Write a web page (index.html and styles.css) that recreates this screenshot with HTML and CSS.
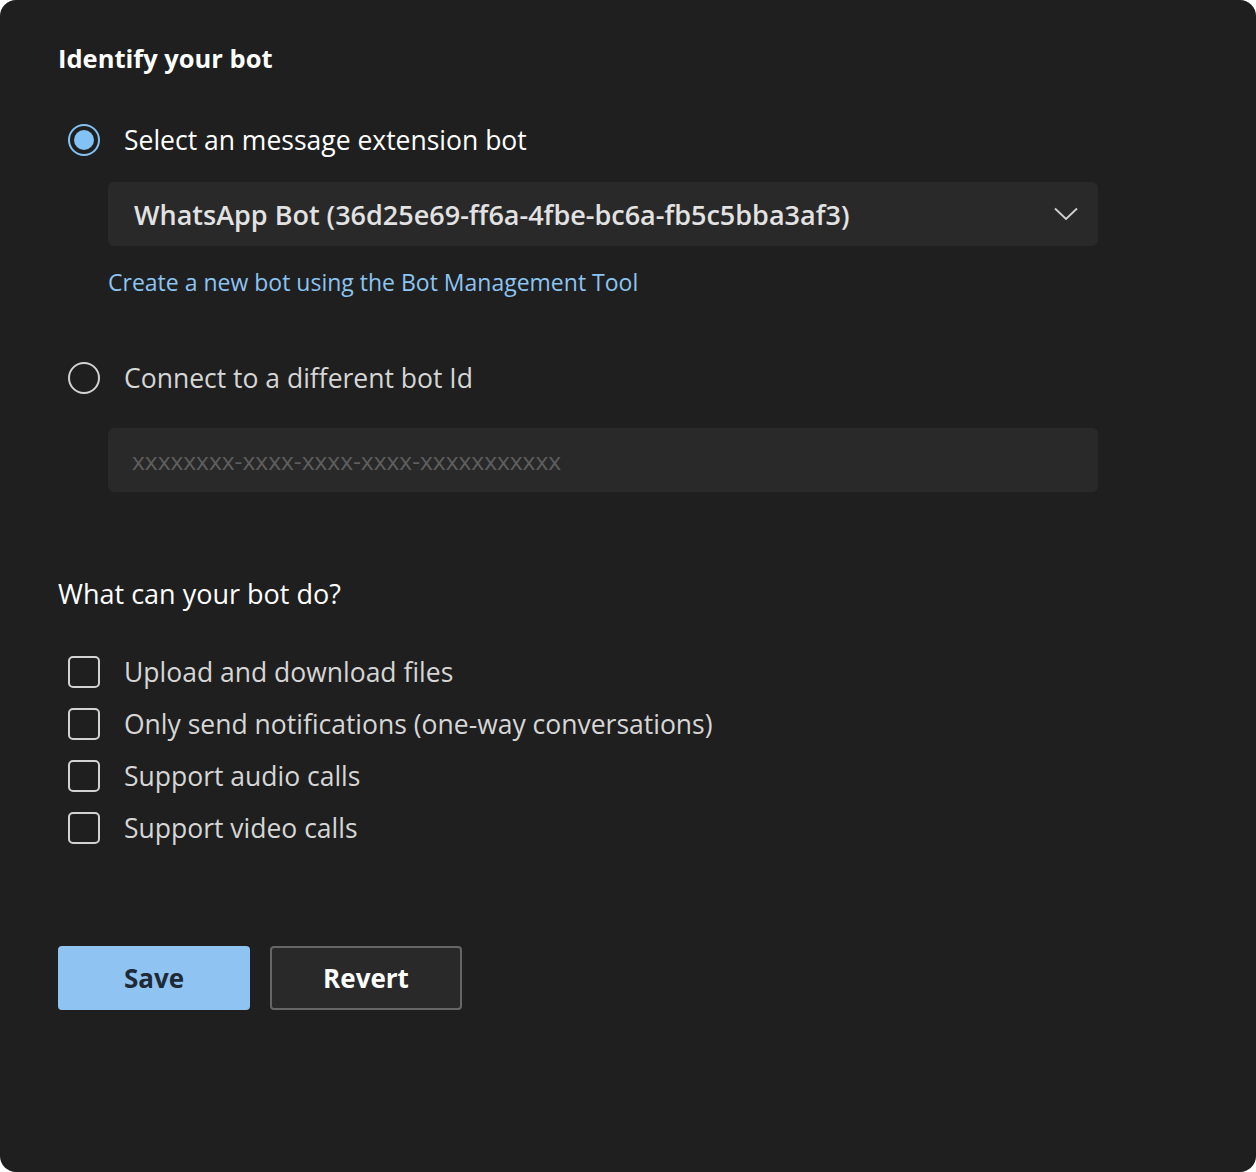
FILE: index.html
```html
<!DOCTYPE html>
<html>
<head>
    <meta charset="UTF-8">
    <title>Bot settings</title>
    <link rel="stylesheet" href="styles.css">
</head>
<body>
    <div class="settings-panel">
        <h2 class="section-title">Identify your bot</h2>

        <div class="option-row">
            <span class="radio checked"></span>
            <span class="option-label active">Select an message extension bot</span>
        </div>
        <div class="field dropdown">
            <span class="dropdown-value">WhatsApp Bot (36d25e69-ff6a-4fbe-bc6a-fb5c5bba3af3)</span>
            <svg class="chevron" width="24" height="14" viewBox="0 0 24 14">
                <path d="M1 1.5 L12 12 L23 1.5" fill="none" stroke="#d2d2d2" stroke-width="1.8"/>
            </svg>
        </div>
        <a class="tool-link" href="#">Create a new bot using the Bot Management Tool</a>

        <div class="option-row second">
            <span class="radio"></span>
            <span class="option-label">Connect to a different bot Id</span>
        </div>
        <div class="field text-field">
            <span class="placeholder">xxxxxxxx-xxxx-xxxx-xxxx-xxxxxxxxxxx</span>
        </div>

        <h3 class="section-subtitle">What can your bot do?</h3>

        <div class="check-list">
            <div class="check-row"><span class="checkbox"></span><span class="option-label">Upload and download files</span></div>
            <div class="check-row"><span class="checkbox"></span><span class="option-label">Only send notifications (one-way conversations)</span></div>
            <div class="check-row"><span class="checkbox"></span><span class="option-label">Support audio calls</span></div>
            <div class="check-row"><span class="checkbox"></span><span class="option-label">Support video calls</span></div>
        </div>

        <div class="actions">
            <button class="btn btn-primary">Save</button>
            <button class="btn btn-secondary">Revert</button>
        </div>
    </div>
</body>
</html>
```

FILE: styles.css
```css
body {
    margin: 0;
    background: #ffffff;
    font-family: 'Open Sans', 'Noto Sans', sans-serif;
}
.settings-panel {
    box-sizing: border-box;
    height: 100vh;
    background: #1f1f1f;
    border-radius: 16px;
    padding: 40px 58px;
    display: flex;
    flex-direction: column;
    align-items: flex-start;
}
.section-title {
    margin: 0;
    font-size: 25.5px;
    line-height: 36px;
    font-weight: 700;
    color: #ffffff;
}
.option-row {
    display: flex;
    align-items: center;
    gap: 24px;
    height: 36px;
    margin: 46px 0 0 10px;
}
.option-row.second {
    margin-top: 62px;
}
.option-label {
    font-size: 26.5px;
    line-height: 34px;
    color: #d6d6d6;
}
.option-label.active {
    color: #ffffff;
}
.radio {
    box-sizing: border-box;
    width: 32px;
    height: 32px;
    border: 2px solid #d2d2d2;
    border-radius: 50%;
    display: flex;
    align-items: center;
    justify-content: center;
}
.radio.checked {
    border-color: #83c2f5;
}
.radio.checked::after {
    content: '';
    width: 20px;
    height: 20px;
    border-radius: 50%;
    background: #83c2f5;
}
.field {
    box-sizing: border-box;
    width: 990px;
    height: 64px;
    margin-left: 50px;
    background: #292929;
    border-radius: 6px;
    display: flex;
    align-items: center;
    justify-content: space-between;
    padding: 0 20px 0 26px;
}
.dropdown {
    margin-top: 24px;
}
.dropdown-value {
    font-size: 27px;
    font-weight: 600;
    color: #e2e2e2;
}
.text-field {
    margin-top: 32px;
    padding-left: 24px;
}
.placeholder {
    font-size: 24.5px;
    color: #5e5e5e;
}
.tool-link {
    margin: 20px 0 0 50px;
    font-size: 23px;
    line-height: 32px;
    color: #8cc4f2;
    text-decoration: none;
}
.section-subtitle {
    margin: 84px 0 0;
    font-size: 27px;
    line-height: 36px;
    font-weight: 400;
    color: #ffffff;
}
.check-list {
    margin: 42px 0 0 10px;
    display: flex;
    flex-direction: column;
    gap: 16px;
}
.check-row {
    display: flex;
    align-items: center;
    gap: 24px;
    height: 36px;
}
.checkbox {
    box-sizing: border-box;
    width: 32px;
    height: 32px;
    border: 2px solid #d2d2d2;
    border-radius: 5px;
}
.actions {
    display: flex;
    gap: 20px;
    margin-top: 100px;
}
.btn {
    box-sizing: border-box;
    width: 192px;
    height: 64px;
    border-radius: 4px;
    font-family: inherit;
    font-size: 26px;
    font-weight: 700;
    cursor: pointer;
}
.btn-primary {
    background: #8fc4f2;
    border: none;
    color: #1e2a36;
}
.btn-secondary {
    background: #292929;
    border: 2px solid #666666;
    color: #ffffff;
}
```
